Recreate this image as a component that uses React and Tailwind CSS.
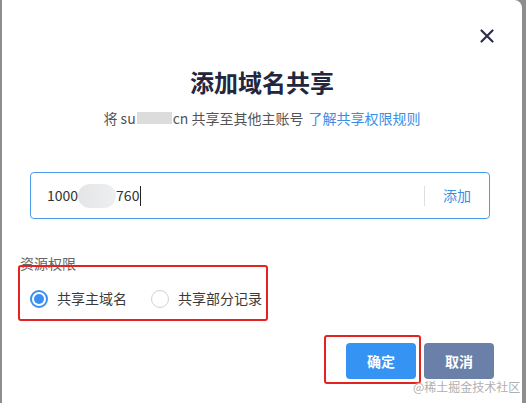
import React from 'react';

const cjk = { fontFamily: '"Noto Sans CJK SC", "Noto Sans", sans-serif' };

const Radio = ({ checked, label }) => (
	<label className="flex items-center gap-[9px] text-[14px] text-[#3a3a3a]">
		{checked ? (
			<span className="flex h-[18px] w-[18px] items-center justify-center rounded-full border-2 border-[#3b8ff3] bg-white">
				<span className="h-[10px] w-[10px] rounded-full bg-[#3b8ff3]" />
			</span>
		) : (
			<span className="h-[18px] w-[18px] rounded-full border-[1.5px] border-[#cfd3d9] bg-white" />
		)}
		{label}
	</label>
);

export default function App() {
	return (
		<div className="flex h-[403px] w-[526px] overflow-hidden bg-[#8d8d8d]" style={cjk}>
			<div className="relative ml-[2px] flex w-[520px] flex-col rounded-tr-[8px] bg-white">
				<button type="button" className="absolute left-[476px] top-[27px] h-[18px] w-[18px]">
					<svg viewBox="0 0 18 18" width="18" height="18" fill="none" stroke="#2c2e4b" strokeWidth="2.2" strokeLinecap="round">
						<path d="M3.5 3.5 L14.5 14.5 M14.5 3.5 L3.5 14.5" />
					</svg>
				</button>

				<h1 className="mt-[66px] text-center text-[24px] font-bold leading-[32px] text-[#23263c]">
					添加域名共享
				</h1>
				<p className="mt-[10px] flex items-center justify-center text-[14px] leading-[20px] text-[#555]">
					将 su
					<span className="mx-[1px] inline-block h-[12px] w-[35px] bg-[#dcdcdc]" />
					cn 共享至其他主账号
					<a className="ml-[5px] text-[#3a8ee6]">了解共享权限规则</a>
				</p>

				<div className="ml-[28px] mt-[44px] flex h-[47px] w-[460px] items-center rounded-[4px] border border-[#4a9be8] pl-[16px] pr-[18px]">
					<div className="flex flex-1 items-center text-[14px] text-[#333]">
						<span>1000</span>
						<span className="inline-block h-[24px] w-[38px] rounded-full bg-gradient-to-r from-[#e4e5e7] to-[#eeeff0]" />
						<span>760</span>
						<span className="ml-[1px] inline-block h-[20px] w-[1px] bg-[#222]" />
					</div>
					<span className="mr-[18px] h-[20px] w-[1px] bg-[#dedede]" />
					<span className="text-[14px] text-[#3a8ee6]">添加</span>
				</div>

				<div className="ml-[18px] mt-[34px] text-[14px] leading-[20px] text-[#666]">资源权限</div>
				<div className="ml-[28px] mt-[15px] flex items-center gap-[24px]">
					<Radio checked label="共享主域名" />
					<Radio label="共享部分记录" />
				</div>

				<div className="mt-[34px] flex justify-end gap-[8px] pr-[28px]">
					<button type="button" className="h-[36px] w-[70px] rounded-[4px] bg-[#3593f4] text-[14px] font-bold text-white">
						确定
					</button>
					<button type="button" className="h-[36px] w-[70px] rounded-[4px] bg-[#6a80a8] text-[14px] font-bold text-white">
						取消
					</button>
				</div>

				{/* annotation boxes */}
				<div className="pointer-events-none absolute left-[16px] top-[265px] h-[56px] w-[250px] rounded-[3px] border-2 border-[#e3231f]" />
				<div className="pointer-events-none absolute left-[322px] top-[335px] h-[49px] w-[97px] rounded-[3px] border-2 border-[#e3231f]" />

				<span className="absolute left-[411px] top-[379px] whitespace-nowrap text-[12px] leading-[16px] text-[#b0b0b0] [text-shadow:0_0_2px_#fff]">
					@稀土掘金技术社区
				</span>
			</div>
		</div>
	);
}
